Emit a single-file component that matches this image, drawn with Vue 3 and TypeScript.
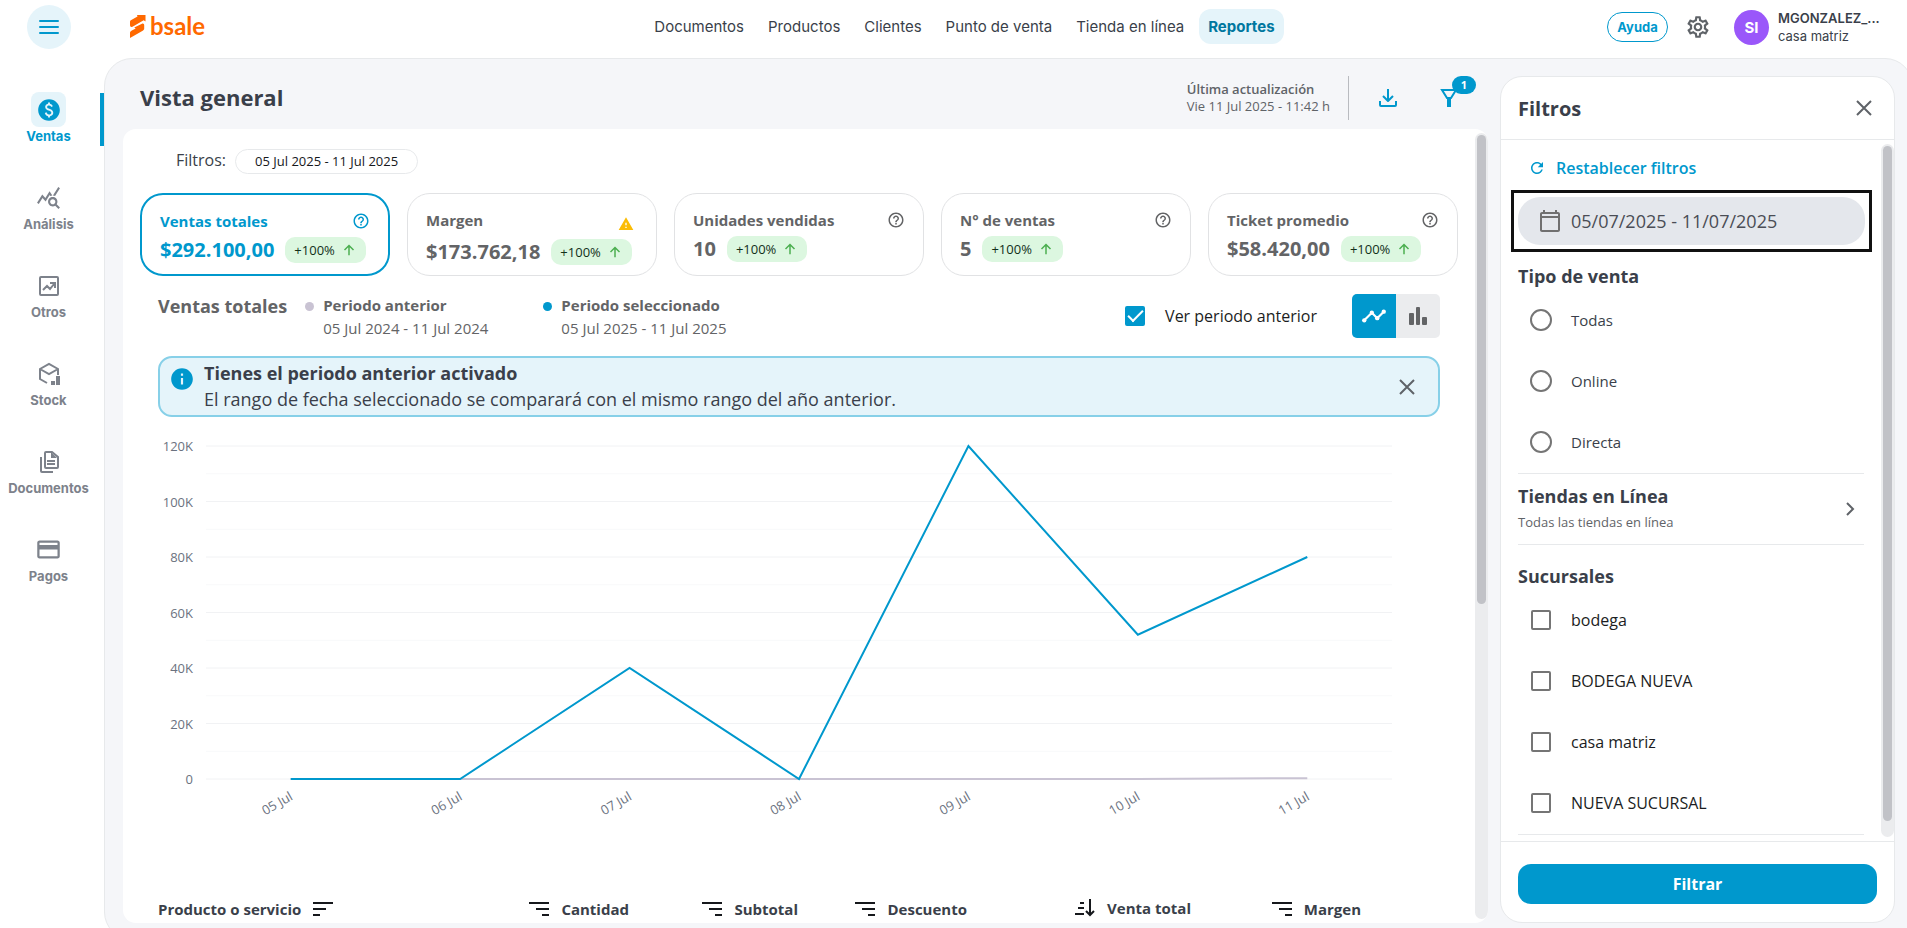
<script setup lang="ts">
import { computed, ref } from 'vue'

interface MenuItem {
  id: string
  label: string
}

interface Kpi {
  title: string
  value: string
  warning?: boolean
}

const menu: MenuItem[] = [
  { id: 'ventas', label: 'Ventas' },
  { id: 'analisis', label: 'Análisis' },
  { id: 'otros', label: 'Otros' },
  { id: 'stock', label: 'Stock' },
  { id: 'documentos', label: 'Documentos' },
  { id: 'pagos', label: 'Pagos' },
]
const activeMenu = ref('ventas')

const sections = ['Documentos', 'Productos', 'Clientes', 'Punto de venta', 'Tienda en línea', 'Reportes']
const activeSection = ref('Reportes')

const kpis: Kpi[] = [
  { title: 'Ventas totales', value: '$292.100,00' },
  { title: 'Margen', value: '$173.762,18', warning: true },
  { title: 'Unidades vendidas', value: '10' },
  { title: 'N° de ventas', value: '5' },
  { title: 'Ticket promedio', value: '$58.420,00' },
]
const activeKpi = ref('Ventas totales')

const showPrevious = ref(true)
const showBanner = ref(true)
const chartKind = ref<'line' | 'bar'>('line')

const days = ['05 Jul', '06 Jul', '07 Jul', '08 Jul', '09 Jul', '10 Jul', '11 Jul']
const current = [0, 0, 40000, 0, 120000, 52000, 80000]
const previous = [0, 0, 0, 0, 0, 0, 300]

const plot = { left: 48, right: 1234, top: 16, bottom: 349, max: 120000 }
const band = (plot.right - plot.left) / days.length
const px = (i: number) => plot.left + band * (i + 0.5)
const py = (v: number) => plot.bottom - (v / plot.max) * (plot.bottom - plot.top)
const toPoints = (values: number[]) => values.map((v, i) => `${px(i)},${py(v)}`).join(' ')
const currentPoints = computed(() => toPoints(current))
const previousPoints = computed(() => toPoints(previous))
const ticks = [0, 20, 40, 60, 80, 100, 120]
const minorTicks = [10, 30, 50, 70, 90, 110]

const columns = ['Cantidad', 'Subtotal', 'Descuento', 'Venta total', 'Margen']

const dateRange = ref('05/07/2025 - 11/07/2025')
const saleTypes = ['Todas', 'Online', 'Directa']
const saleType = ref('')
const branches = ['bodega', 'BODEGA NUEVA', 'casa matriz', 'NUEVA SUCURSAL']
const selectedBranches = ref<string[]>([])
</script>

<template>
  <div class="app">
    <aside class="rail">
      <button class="burger" type="button" aria-label="Menú">
        <svg width="22" height="16" viewBox="0 0 22 16" fill="none" stroke="currentColor" stroke-width="2" stroke-linecap="round">
          <path d="M2 2h18M2 8h18M2 14h18" />
        </svg>
      </button>
      <nav class="rail-nav">
        <a
          v-for="item in menu"
          :key="item.id"
          href="#"
          class="rail-item"
          :class="{ active: item.id === activeMenu }"
          @click.prevent="activeMenu = item.id"
        >
          <span class="rail-icon">
            <svg v-if="item.id === 'ventas'" width="26" height="26" viewBox="0 0 24 24" fill="currentColor">
              <path d="M12 2C6.48 2 2 6.48 2 12s4.48 10 10 10 10-4.48 10-10S17.52 2 12 2zm.88 15.76V19h-1.75v-1.29c-.74-.18-2.39-.77-3.02-2.96l1.65-.67c.06.22.58 2.09 2.4 2.09.93 0 1.98-.48 1.98-1.61 0-.96-.7-1.46-2.28-2.03-1.1-.39-3.35-1.03-3.35-3.31 0-.1.01-2.4 2.62-2.96V5h1.75v1.24c1.84.32 2.51 1.79 2.66 2.23l-1.58.67c-.11-.35-.59-1.34-1.9-1.34-.7 0-1.81.37-1.81 1.39 0 .95.86 1.31 2.64 1.9 2.4.83 3.01 2.05 3.01 3.45 0 2.63-2.5 3.13-3.02 3.22z" />
            </svg>
            <svg v-else-if="item.id === 'analisis'" width="25" height="25" viewBox="0 0 24 24" fill="currentColor">
              <path d="M19.88 18.47c.44-.7.7-1.51.7-2.39 0-2.49-2.01-4.5-4.5-4.5s-4.5 2.01-4.5 4.5 2.01 4.5 4.49 4.5c.88 0 1.7-.26 2.39-.7L21.58 23 23 21.58l-3.12-3.11zm-3.8.11c-1.38 0-2.5-1.12-2.5-2.5s1.12-2.5 2.5-2.5 2.5 1.12 2.5 2.5-1.12 2.5-2.5 2.5zm-.36-8.5c-.74.02-1.45.18-2.1.45l-.55-.83-3.8 6.18-3.01-3.52-3.63 5.81L1 17l5-8 3 3.5L13 6l2.72 4.08zm2.59.5c-.64-.28-1.33-.45-2.05-.49L21.38 2 23 3.18l-4.69 7.4z" />
            </svg>
            <svg v-else-if="item.id === 'otros'" width="26" height="26" viewBox="0 0 26 26" fill="none" stroke="currentColor" stroke-width="2">
              <rect x="4" y="4" width="18" height="18" rx="1" />
              <path d="M7 17l4-4 3 3 4-5M14 10h5v5" />
            </svg>
            <svg v-else-if="item.id === 'stock'" width="26" height="26" viewBox="0 0 26 26" fill="none" stroke="currentColor" stroke-width="2">
              <path d="M11 22l-7-4V8l9-5 9 5v6M4 8l9 5 9-5" />
              <path d="M20 15h4v9h-4zM15 20h4v4h-4z" fill="currentColor" stroke="none" />
            </svg>
            <svg v-else-if="item.id === 'documentos'" width="26" height="26" viewBox="0 0 26 26" fill="none" stroke="currentColor" stroke-width="2">
              <path d="M16 3H10a1 1 0 0 0-1 1v14a1 1 0 0 0 1 1h11a1 1 0 0 0 1-1V8zM5 8v14a1 1 0 0 0 1 1h11M11 12h8M11 15h8" />
              <path d="M15 3v6h6z" fill="currentColor" stroke="none" />
            </svg>
            <svg v-else width="27" height="27" viewBox="0 0 24 24" fill="currentColor">
              <path d="M20 4H4c-1.11 0-1.99.89-1.99 2L2 18c0 1.11.89 2 2 2h16c1.11 0 2-.89 2-2V6c0-1.11-.89-2-2-2zm0 14H4v-6h16v6zm0-10H4V6h16v2z" />
            </svg>
          </span>
          <span class="rail-label">{{ item.label }}</span>
        </a>
      </nav>
    </aside>

    <div class="body">
      <header class="topbar">
        <div class="brand-zone">
          <a class="brand" href="#" aria-label="bsale">
            <svg width="18" height="24" viewBox="0 0 18 24" fill="#ff6900">
              <path d="M1 11V8c0-1 .5-1.600 1.300-2L8.500 2.500 8 1h8.500v6.500l-1.800-1.200L3.500 12.700C2 13.400 1 12.600 1 11z" />
              <path d="M1 24v-5c0-1 .5-1.700 1.400-2.200l4.300-2.300-1.500-1L13 9.800c1.200-.6 2.200.2 2.200 1.500v3.200c0 1-.6 1.800-1.500 2.300z" />
            </svg>
            <span class="brand-name">bsale</span>
          </a>
        </div>
        <nav class="sections">
          <a
            v-for="s in sections"
            :key="s"
            href="#"
            :class="{ active: s === activeSection }"
            @click.prevent="activeSection = s"
          >{{ s }}</a>
        </nav>
        <div class="account">
          <button class="help" type="button">Ayuda</button>
          <button class="icon-btn gear" type="button" aria-label="Configuración">
            <svg width="26" height="26" viewBox="0 0 24 24" fill="currentColor">
              <path d="M19.43 12.98c.04-.32.07-.64.07-.98 0-.34-.03-.66-.07-.98l2.11-1.65c.19-.15.24-.42.12-.64l-2-3.46c-.09-.16-.26-.25-.44-.25-.06 0-.12.01-.17.03l-2.49 1c-.52-.4-1.08-.73-1.69-.98l-.38-2.65C14.46 2.18 14.25 2 14 2h-4c-.25 0-.46.18-.49.42l-.38 2.65c-.61.25-1.17.59-1.69.98l-2.49-1c-.06-.02-.12-.03-.18-.03-.17 0-.34.09-.43.25l-2 3.46c-.13.22-.07.49.12.64l2.11 1.65c-.04.32-.07.65-.07.98 0 .33.03.66.07.98l-2.11 1.65c-.19.15-.24.42-.12.64l2 3.46c.09.16.26.25.44.25.06 0 .12-.01.17-.03l2.49-1c.52.4 1.08.73 1.69.98l.38 2.65c.03.24.24.42.49.42h4c.25 0 .46-.18.49-.42l.38-2.65c.61-.25 1.17-.59 1.69-.98l2.49 1c.06.02.12.03.18.03.17 0 .34-.09.43-.25l2-3.46c.12-.22.07-.49-.12-.64l-2.11-1.65zm-1.98-1.71c.04.31.05.52.05.73 0 .21-.02.43-.05.73l-.14 1.13.89.7 1.08.84-.7 1.21-1.27-.51-1.04-.42-.9.68c-.43.32-.84.56-1.25.73l-1.06.43-.16 1.13-.2 1.35h-1.4l-.19-1.35-.16-1.13-1.06-.43c-.43-.18-.83-.41-1.23-.71l-.91-.7-1.06.43-1.27.51-.7-1.21 1.08-.84.89-.7-.14-1.13c-.03-.31-.05-.54-.05-.74s.02-.43.05-.73l.14-1.13-.89-.7-1.08-.84.7-1.21 1.27.51 1.04.42.9-.68c.43-.32.84-.56 1.25-.73l1.06-.43.16-1.13.2-1.35h1.39l.19 1.35.16 1.13 1.06.43c.43.18.83.41 1.23.71l.91.7 1.06-.43 1.27-.51.7 1.21-1.07.85-.89.7.14 1.13zM12 8c-2.21 0-4 1.79-4 4s1.79 4 4 4 4-1.79 4-4-1.79-4-4-4zm0 6c-1.1 0-2-.9-2-2s.9-2 2-2 2 .9 2 2-.9 2-2 2z" />
            </svg>
          </button>
          <span class="avatar">SI</span>
          <div class="who">
            <strong>MGONZALEZ_...</strong>
            <span>casa matriz</span>
          </div>
        </div>
      </header>

      <div class="workspace">
        <main class="report">
          <div class="report-head">
            <h1>Vista general</h1>
            <div class="updated">
              <span>Última actualización</span>
              <time>Vie 11 Jul 2025 - 11:42 h</time>
            </div>
            <button class="icon-btn download" type="button" aria-label="Descargar">
              <svg width="20" height="20" viewBox="0 0 20 20" fill="none" stroke="currentColor" stroke-width="2" stroke-linejoin="round">
                <path d="M2 13v4a1 1 0 0 0 1 1h14a1 1 0 0 0 1-1v-4M10 1v12M5 8l5 5 5-5" />
              </svg>
            </button>
            <button class="icon-btn funnel" type="button" aria-label="Filtros aplicados">
              <svg width="18" height="20" viewBox="0 0 18 20" fill="none" stroke="currentColor" stroke-width="2">
                <path d="M2 2h14l-5 8H7z" />
                <path d="M7 9h4v10H7z" fill="currentColor" stroke="none" />
              </svg>
              <span class="count">1</span>
            </button>
          </div>

          <div class="sheet">
            <div class="sheet-body">
              <div class="chips">
                <span class="chips-label">Filtros:</span>
                <span class="chip">05 Jul 2025 - 11 Jul 2025</span>
              </div>

              <div class="kpis">
                <button
                  v-for="k in kpis"
                  :key="k.title"
                  type="button"
                  class="kpi"
                  :class="{ active: k.title === activeKpi }"
                  @click="activeKpi = k.title"
                >
                  <span class="kpi-top">
                    <span class="kpi-title">{{ k.title }}</span>
                    <svg v-if="k.warning" class="warn" width="16" height="26" viewBox="0 0 24 24" fill="#fbbc05">
                      <path d="M1 21h22L12 2 1 21zm12-3h-2v-2h2v2zm0-4h-2v-4h2v4z" />
                    </svg>
                    <svg v-else width="18" height="18" viewBox="0 0 24 24" fill="currentColor">
                      <path d="M11 18h2v-2h-2v2zm1-16C6.48 2 2 6.48 2 12s4.48 10 10 10 10-4.48 10-10S17.52 2 12 2zm0 18c-4.41 0-8-3.59-8-8s3.59-8 8-8 8 3.59 8 8-3.59 8-8 8zm0-14c-2.21 0-4 1.79-4 4h2c0-1.1.9-2 2-2s2 .9 2 2c0 2-3 1.75-3 5h2c0-2.25 3-2.5 3-5 0-2.21-1.79-4-4-4z" />
                    </svg>
                  </span>
                  <span class="kpi-bottom">
                    <span class="kpi-value">{{ k.value }}</span>
                    <span class="trend">
                      +100%
                      <svg width="12" height="12" viewBox="0 0 16 16" fill="none" stroke="#4caf50" stroke-width="2">
                        <path d="M8 15V2M2 8l6-6 6 6" />
                      </svg>
                    </span>
                  </span>
                </button>
              </div>

              <div class="inner">
                <div class="legend">
                  <h2>Ventas totales</h2>
                  <div class="period previous">
                    <strong>Periodo anterior</strong>
                    <span>05 Jul 2024 - 11 Jul 2024</span>
                  </div>
                  <div class="period selected">
                    <strong>Periodo seleccionado</strong>
                    <span>05 Jul 2025 - 11 Jul 2025</span>
                  </div>
                  <label class="compare">
                    <input v-model="showPrevious" class="tick" type="checkbox" />
                    <span>Ver periodo anterior</span>
                  </label>
                  <div class="kind">
                    <button type="button" :class="{ on: chartKind === 'line' }" aria-label="Líneas" @click="chartKind = 'line'">
                      <svg width="26" height="26" viewBox="0 0 24 24" fill="none" stroke="currentColor" stroke-width="2">
                        <path d="M3 16l7-7 5 5 6-6" />
                        <g fill="currentColor" stroke="none">
                          <circle cx="3" cy="16" r="2" />
                          <circle cx="10" cy="9" r="2" />
                          <circle cx="15" cy="14" r="2" />
                          <circle cx="21" cy="8" r="2" />
                        </g>
                      </svg>
                    </button>
                    <button type="button" :class="{ on: chartKind === 'bar' }" aria-label="Barras" @click="chartKind = 'bar'">
                      <svg width="20" height="20" viewBox="0 0 20 20" fill="currentColor">
                        <rect x="1" y="7" width="5" height="12" rx="1" />
                        <rect x="8" y="1" width="4" height="18" rx="1" />
                        <rect x="14" y="11" width="5" height="8" rx="1" />
                      </svg>
                    </button>
                  </div>
                </div>

                <div v-if="showBanner" class="banner">
                  <svg class="info" width="26" height="26" viewBox="0 0 24 24" fill="#0098cd">
                    <path d="M12 2C6.48 2 2 6.48 2 12s4.48 10 10 10 10-4.48 10-10S17.52 2 12 2zm1 15h-2v-6h2v6zm0-8h-2V7h2v2z" />
                  </svg>
                  <div class="banner-text">
                    <strong>Tienes el periodo anterior activado</strong>
                    <span>El rango de fecha seleccionado se comparará con el mismo rango del año anterior.</span>
                  </div>
                  <button class="icon-btn" type="button" aria-label="Cerrar aviso" @click="showBanner = false">
                    <svg width="16" height="16" viewBox="0 0 16 16" stroke="currentColor" stroke-width="2"><path d="M1 1l14 14M15 1L1 15" /></svg>
                  </button>
                </div>

                <svg class="chart" viewBox="0 0 1282 455" role="img" aria-label="Ventas totales por día">
                  <g stroke="#f8f9fa">
                    <line v-for="t in minorTicks" :key="t" :x1="plot.left" :x2="plot.right" :y1="py(t * 1000)" :y2="py(t * 1000)" />
                  </g>
                  <g stroke="#f1f2f4">
                    <line v-for="t in ticks" :key="t" :x1="plot.left" :x2="plot.right" :y1="py(t * 1000)" :y2="py(t * 1000)" />
                  </g>
                  <g class="axis" text-anchor="end">
                    <text v-for="t in ticks" :key="t" x="35" :y="py(t * 1000) + 5">{{ t ? t + 'K' : '0' }}</text>
                  </g>
                  <g class="axis" text-anchor="end">
                    <text v-for="(d, i) in days" :key="d" :transform="`translate(${px(i) + 3} 369) rotate(-30)`">{{ d }}</text>
                  </g>
                  <polyline v-if="showPrevious" :points="previousPoints" fill="none" stroke="#c9c3d3" stroke-width="2" />
                  <polyline :points="currentPoints" fill="none" stroke="#0098cd" stroke-width="2" />
                </svg>

                <table class="products">
                  <colgroup>
                    <col />
                    <col class="c-num" />
                    <col class="c-num" />
                    <col class="c-num" />
                    <col class="c-total" />
                    <col class="c-last" />
                  </colgroup>
                  <thead>
                    <tr>
                      <th class="first">
                        <button type="button">
                          Producto o servicio
                          <svg width="20" height="14" viewBox="0 0 20 14" fill="#16181c"><path d="M0 0h20v2H0zM0 6h13v2H0zM0 12h7v2H0z" /></svg>
                        </button>
                      </th>
                      <th v-for="c in columns" :key="c">
                        <button type="button">
                          <svg v-if="c === 'Venta total'" width="20" height="18" viewBox="0 0 20 18" fill="none" stroke="#16181c" stroke-width="2">
                            <path d="M15 0v16M11 12l4 4 4-4M5 4h4M3 9h6M0 15h9" />
                          </svg>
                          <svg v-else width="20" height="14" viewBox="0 0 20 14" fill="#16181c"><path d="M0 0h20v2H0zM7 6h13v2H7zM13 12h7v2h-7z" /></svg>
                          {{ c }}
                        </button>
                      </th>
                    </tr>
                  </thead>
                </table>
              </div>
            </div>
            <div class="track" aria-hidden="true"><div class="thumb short"></div></div>
          </div>
        </main>

        <aside class="filters">
          <div class="filters-head">
            <h2>Filtros</h2>
            <button class="icon-btn" type="button" aria-label="Cerrar filtros">
              <svg width="16" height="16" viewBox="0 0 16 16" stroke="currentColor" stroke-width="2"><path d="M1 1l14 14M15 1L1 15" /></svg>
            </button>
          </div>
          <div class="filters-scroll">
            <div class="filters-body">
              <button class="reset" type="button">
                <svg width="18" height="18" viewBox="0 0 24 24" fill="currentColor">
                  <path d="M17.65 6.35C16.2 4.9 14.21 4 12 4c-4.42 0-7.99 3.58-7.99 8s3.57 8 7.99 8c3.73 0 6.84-2.55 7.73-6h-2.08c-.82 2.33-3.04 4-5.65 4-3.31 0-6-2.69-6-6s2.69-6 6-6c1.66 0 3.14.69 4.22 1.78L13 11h7V4l-2.35 2.35z" />
                </svg>
                Restablecer filtros
              </button>

              <div class="highlight">
                <label class="date">
                  <svg width="24" height="24" viewBox="0 0 24 24" fill="#707070">
                    <path d="M20 3h-1V1h-2v2H7V1H5v2H4c-1.1 0-2 .9-2 2v16c0 1.1.9 2 2 2h16c1.1 0 2-.9 2-2V5c0-1.1-.9-2-2-2zm0 18H4V9h16v12zm0-14H4V5h16v2z" />
                  </svg>
                  <input v-model="dateRange" type="text" aria-label="Rango de fechas" />
                </label>
              </div>

              <fieldset class="group types">
                <legend>Tipo de venta</legend>
                <label v-for="t in saleTypes" :key="t" class="option">
                  <input v-model="saleType" class="round" type="radio" name="sale-type" :value="t" />
                  <span>{{ t }}</span>
                </label>
              </fieldset>

              <button class="stores" type="button">
                <span>
                  <strong>Tiendas en Línea</strong>
                  <small>Todas las tiendas en línea</small>
                </span>
                <svg width="10" height="14" viewBox="0 0 10 14" fill="none" stroke="currentColor" stroke-width="2"><path d="M2 1l6 6-6 6" /></svg>
              </button>

              <fieldset class="group branches">
                <legend>Sucursales</legend>
                <label v-for="b in branches" :key="b" class="option">
                  <input v-model="selectedBranches" class="tick" type="checkbox" :value="b" />
                  <span>{{ b }}</span>
                </label>
              </fieldset>
            </div>
            <div class="track" aria-hidden="true"><div class="thumb long"></div></div>
          </div>
          <div class="filters-foot">
            <button class="apply" type="button">Filtrar</button>
          </div>
        </aside>
      </div>
    </div>
  </div>
</template>

<style>
html,
body {
  margin: 0;
  height: 100%;
  overflow: hidden;
}
</style>

<style scoped>
* {
  box-sizing: border-box;
}
.app {
  display: flex;
  height: 100vh;
  overflow: hidden;
  background: #fff;
  color: #3a3f4a;
  font-family: 'Open Sans', sans-serif;
}
button {
  margin: 0;
  padding: 0;
  border: 0;
  background: none;
  color: inherit;
  font: inherit;
  cursor: pointer;
}
a {
  color: inherit;
  text-decoration: none;
}
svg {
  display: block;
  flex: none;
}
h1,
h2 {
  margin: 0;
}
.icon-btn {
  display: grid;
  place-items: center;
  color: #5f6368;
}

/* rail */
.rail {
  flex: none;
  width: 104px;
  display: flex;
  flex-direction: column;
  padding-top: 5px;
  font-family: Inter, sans-serif;
}
.burger {
  width: 44px;
  height: 44px;
  margin-left: 27px;
  border-radius: 50%;
  background: #e5f4fa;
  color: #0098cd;
  display: grid;
  place-items: center;
}
.rail-nav {
  margin-top: 42px;
}
.rail-item {
  display: flex;
  flex-direction: column;
  align-items: center;
  height: 88px;
  padding: 1px 7px 0 0;
  color: #7d828b;
}
.rail-icon {
  width: 35px;
  height: 35px;
  border-radius: 8px;
  display: grid;
  place-items: center;
}
.rail-label {
  font-size: 13px;
  font-weight: 700;
  line-height: 18px;
}
.rail-item.active {
  color: #0098cd;
  background: linear-gradient(#0098cd, #0098cd) right top 2px / 4px 53px no-repeat;
}
.active .rail-icon {
  background: #e5f4fa;
}

/* top bar */
.body {
  flex: 1;
  min-width: 0;
  display: flex;
  flex-direction: column;
}
.topbar {
  flex: none;
  height: 58px;
  padding: 0 16px 14px 25px;
  display: flex;
  align-items: center;
  font-family: Inter, sans-serif;
}
.brand-zone {
  flex: 85 1 0;
}
.account {
  flex: 100 1 0;
  padding-top: 10px;
  display: flex;
  align-items: center;
  justify-content: flex-end;
}
.brand {
  display: inline-flex;
  align-items: center;
  gap: 3px;
  padding-top: 12px;
}
.brand-name {
  color: #ff6900;
  font-family: Lato, sans-serif;
  font-size: 24px;
  font-weight: 700;
  line-height: 24px;
}
.sections {
  display: flex;
  gap: 6px;
  padding-top: 9px;
}
.sections a {
  padding: 0 9px;
  border-radius: 12px;
  font-size: 15px;
  line-height: 35px;
  white-space: nowrap;
}
.sections a.active {
  background: #e5f4fa;
  color: #00779f;
  font-weight: 700;
}
.help {
  width: 61px;
  height: 30px;
  border: 1px solid #0098cd;
  border-radius: 15px;
  color: #0098cd;
  font-size: 13px;
  font-weight: 700;
}
.gear {
  margin: 0 23px 0 17px;
}
.avatar {
  width: 35px;
  height: 35px;
  border-radius: 50%;
  background: #9a57fa;
  color: #fff;
  font-size: 15px;
  font-weight: 700;
  line-height: 35px;
  text-align: center;
}
.who {
  width: 113px;
  margin-left: 9px;
  font-size: 13px;
  line-height: 18px;
}
.who strong,
.who span {
  display: block;
}
.who strong {
  font-weight: 600;
}

/* workspace */
.workspace {
  flex: none;
  height: calc(100vh - 46px);
  margin-right: -6px;
  padding: 17px 17px 16px 18px;
  border: 1px solid #e7e9eb;
  border-radius: 28px;
  background: #f5f6f9;
  display: flex;
  gap: 12px;
}
.report {
  flex: 1;
  min-width: 0;
  display: flex;
  flex-direction: column;
}
.report-head {
  flex: none;
  height: 53px;
  padding: 0 12px 9px 17px;
  display: flex;
  align-items: center;
}
.report-head h1 {
  flex: 1;
  padding-bottom: 2px;
  font-size: 22px;
  font-weight: 700;
  line-height: 30px;
}
.updated {
  height: 44px;
  padding: 5px 18px 0 0;
  border-right: 1px solid #b9bbc0;
  color: #5f6368;
  font-size: 13px;
  line-height: 17px;
}
.updated span,
.updated time {
  display: block;
}
.updated span {
  font-weight: 600;
}
.download,
.funnel {
  color: #0098cd;
}
.download {
  margin-left: 29px;
}
.funnel {
  position: relative;
  margin: 0 18px 0 42px;
}
.count {
  position: absolute;
  left: 12px;
  top: -12px;
  width: 24px;
  height: 18px;
  border-radius: 9px;
  background: #0098cd;
  color: #fff;
  font-size: 11px;
  font-weight: 700;
  line-height: 18px;
}
.sheet {
  flex: 1;
  min-height: 0;
  display: flex;
  border-radius: 13px;
  background: #fff;
  overflow: hidden;
}
.sheet-body {
  flex: 1;
  min-width: 0;
  overflow: hidden;
  padding: 20px 17px 0;
}
.track {
  flex: none;
  width: 13px;
  margin: 4px 0;
  padding: 2px;
  border-radius: 7px;
  background: #ebecee;
}
.thumb {
  border-radius: 5px;
  background: #c1c2c7;
}
.thumb.short {
  height: 60%;
}
.thumb.long {
  height: 98%;
}
.chips {
  height: 25px;
  padding-left: 36px;
  display: flex;
  align-items: center;
  gap: 9px;
}
.chips-label {
  font-size: 16px;
  font-weight: 500;
  line-height: 22px;
  padding-bottom: 3px;
}
.chip {
  padding: 0 19px;
  border: 1px solid #e7e9eb;
  border-radius: 13px;
  color: #16181c;
  font-size: 13px;
  line-height: 23px;
}
.kpis {
  margin-top: 19px;
  display: grid;
  grid-template-columns: repeat(5, 1fr);
  gap: 17px;
}
.kpi {
  height: 83px;
  padding: 15px 18px 0;
  border: 1px solid #e1e2e4;
  border-radius: 23px;
  color: #636466;
  display: flex;
  flex-direction: column;
  justify-content: flex-start;
  text-align: left;
}
.kpi.active {
  border: 2px solid #0098cd;
  color: #0098cd;
}
.kpi-top {
  display: flex;
  justify-content: space-between;
  align-items: flex-start;
}
.kpi-top svg {
  margin-top: 2px;
}
.kpi-top .warn {
  margin-right: 4px;
  margin-bottom: -3px;
}
.kpi-title {
  font-size: 15px;
  font-weight: 700;
  line-height: 22px;
}
.kpi-bottom {
  display: flex;
  align-items: center;
  gap: 11px;
  margin-top: 5px;
}
.kpi-value {
  font-size: 20px;
  font-weight: 700;
  line-height: 26px;
}
.trend {
  height: 26px;
  padding: 0 11px 0 9px;
  border-radius: 10px;
  background: #dcf7e0;
  color: #12301a;
  font-size: 13px;
  display: flex;
  align-items: center;
  gap: 8px;
}
.inner {
  padding: 0 18px;
}
.legend {
  margin-top: 18px;
  height: 44px;
  display: flex;
  align-items: flex-start;
  color: #636466;
}
.legend h2 {
  font-size: 18px;
  font-weight: 700;
  line-height: 24px;
}
.period {
  position: relative;
  padding: 0 0 0 36px;
  line-height: 23px;
}
.period.selected {
  padding-left: 73px;
}
.period::before {
  content: '';
  position: absolute;
  left: 18px;
  top: 8px;
  width: 9px;
  height: 9px;
  border-radius: 50%;
  background: #c9c3d3;
}
.period.selected::before {
  left: 55px;
  background: #0098cd;
}
.period strong,
.period span {
  display: block;
}
.period strong {
  font-size: 15px;
  font-weight: 700;
}
.period span {
  font-size: 15px;
}
.compare {
  margin-left: auto;
  height: 44px;
  display: flex;
  align-items: center;
  gap: 20px;
  color: #1b1d22;
  font-size: 16px;
}
.tick {
  appearance: none;
  flex: none;
  width: 20px;
  height: 20px;
  margin: 0;
  border: 2px solid #757575;
  border-radius: 2px;
  display: grid;
  place-items: center;
}
.tick:checked {
  border-color: #0098cd;
  background: #0098cd;
}
.tick:checked::before {
  content: '';
  width: 13px;
  height: 6px;
  margin-top: -4px;
  border: 2px solid #fff;
  border-width: 0 0 2px 2px;
  rotate: -45deg;
}
.kind {
  margin-left: 35px;
  display: flex;
  border-radius: 5px;
  overflow: hidden;
  background: #ebecee;
}
.kind button {
  width: 44px;
  height: 44px;
  display: grid;
  place-items: center;
}
.kind .on {
  background: #0098cd;
  color: #fff;
}
.banner {
  margin-top: 18px;
  height: 61px;
  padding: 0 23px 0 9px;
  border: 2px solid #87d0e8;
  border-radius: 14px;
  background: #e5f4fa;
  display: flex;
  align-items: center;
}
.info {
  align-self: flex-start;
  margin-top: 8px;
}
.banner-text {
  flex: 1;
  padding: 0 0 1px 9px;
  font-size: 18px;
  line-height: 26px;
}
.banner-text strong,
.banner-text span {
  display: block;
}
.chart {
  width: 100%;
  margin-top: 13px;
}
.axis text {
  fill: #6b7280;
  font-size: 13px;
}
.products {
  width: 100%;
  border-collapse: collapse;
  table-layout: fixed;
}
.c-num {
  width: 169px;
}
.c-total {
  width: 224px;
}
.c-last {
  width: 249px;
}
.products th {
  height: 48px;
  padding: 0;
  font-size: 15px;
  font-weight: 700;
  text-align: right;
}
.products th:last-child {
  padding-right: 79px;
}
.products th.first {
  text-align: left;
}
.products button {
  display: inline-flex;
  align-items: center;
  gap: 12px;
  line-height: 22px;
}

/* filters panel */
.filters {
  flex: none;
  width: 395px;
  border: 1px solid #e7e9eb;
  border-radius: 22px;
  background: #fff;
  display: flex;
  flex-direction: column;
  overflow: hidden;
}
.filters-head {
  flex: none;
  height: 63px;
  padding: 0 22px 0 17px;
  border-bottom: 1px solid #e7e9eb;
  display: flex;
  align-items: center;
  justify-content: space-between;
}
.filters-head h2 {
  font-size: 20px;
  font-weight: 700;
}
.filters-scroll {
  flex: 1;
  min-height: 0;
  display: flex;
}
.filters-body {
  flex: 1;
  min-width: 0;
  padding: 17px 17px 0;
  overflow: hidden;
}
.reset {
  height: 22px;
  padding-left: 10px;
  display: flex;
  align-items: center;
  gap: 10px;
  color: #0098cd;
  font-size: 16px;
  font-weight: 600;
}
.highlight {
  margin: 11px -8px 0 -7px;
  padding: 4px;
  border: 3px solid #111;
}
.date {
  height: 48px;
  padding: 0 20px;
  border-radius: 22px;
  background: #e4e7ec;
  display: flex;
  align-items: center;
  gap: 9px;
}
.date input {
  flex: 1;
  min-width: 0;
  padding: 0;
  border: 0;
  outline: 0;
  background: none;
  color: #4a4d55;
  font: 18px / 26px 'Open Sans', sans-serif;
}
.group {
  min-width: 0;
  margin: 0;
  padding: 0 0 1px;
  border: 0;
  border-bottom: 1px solid #e7e9eb;
}
.group legend,
.stores strong {
  padding: 0;
  font-size: 18px;
  font-weight: 700;
  line-height: 26px;
}
.types {
  margin-top: 11px;
}
.option {
  height: 61px;
  padding-left: 12px;
  display: flex;
  align-items: center;
  gap: 19px;
  font-size: 15px;
}
.branches .option {
  color: #1b1d22;
  font-size: 16px;
}
.branches .tick {
  margin: 0 1px;
}
.round {
  appearance: none;
  width: 22px;
  height: 22px;
  margin: 0;
  border: 2px solid #757575;
  border-radius: 50%;
}
.round:checked {
  border: 7px solid #0098cd;
}
.stores {
  width: 100%;
  height: 71px;
  padding: 0 9px 0 0;
  border-bottom: 1px solid #e7e9eb;
  display: flex;
  align-items: center;
  justify-content: space-between;
  text-align: left;
}
.stores svg {
  color: #5f6368;
}
.stores strong,
.stores small {
  display: block;
}
.stores small {
  color: #5f6368;
  font-size: 13px;
  line-height: 26px;
}
.branches {
  margin-top: 18px;
}
.filters-foot {
  flex: none;
  height: 81px;
  padding: 22px 17px 0;
  border-top: 1px solid #e7e9eb;
}
.apply {
  width: 100%;
  height: 40px;
  border-radius: 13px;
  background: #0098cd;
  color: #fff;
  font-size: 16px;
  font-weight: 700;
}
</style>
